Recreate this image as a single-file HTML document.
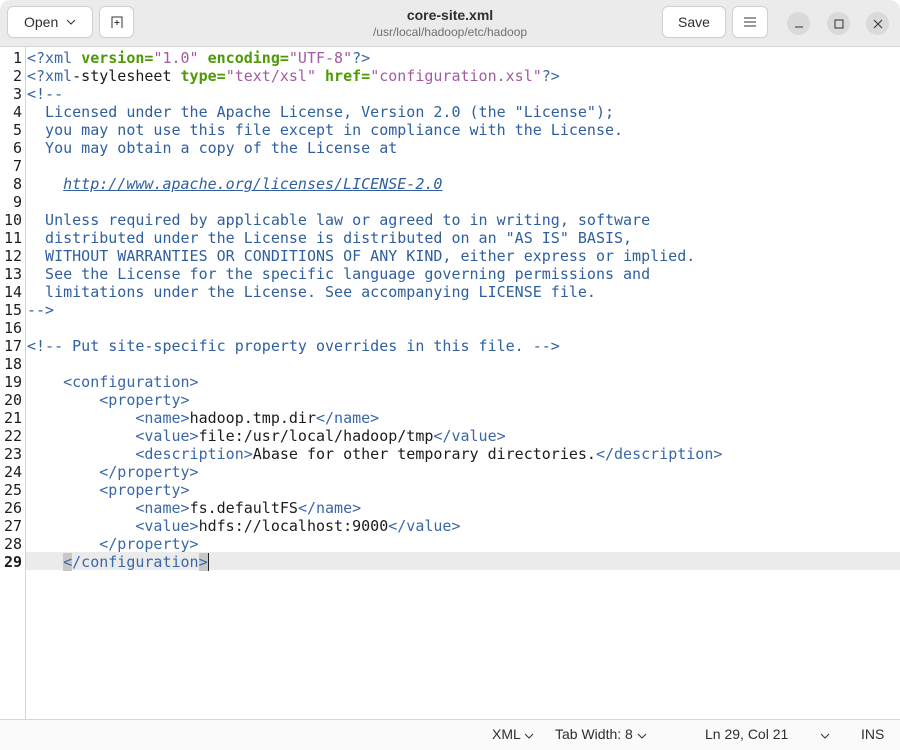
<!DOCTYPE html>
<html><head><meta charset="utf-8"><style>
body{margin:0;width:900px;height:749px;overflow:hidden;background:#fff;font-family:"Liberation Sans",sans-serif;position:relative}
.hdr{position:absolute;left:0;top:0;width:900px;height:46px;background:#ebebeb;border-bottom:1px solid #d6d6d6;border-radius:10px 10px 0 0}
.btn{position:absolute;top:6px;height:32px;background:#fff;border:1px solid #d0d0d0;border-radius:6px;box-sizing:border-box;font-size:14px;color:#2e2e2e;display:flex;align-items:center;justify-content:center}
.circ{position:absolute;top:12px;width:23px;height:23px;border-radius:50%;background:#dadada;display:flex;align-items:center;justify-content:center}
.title{position:absolute;left:0;width:900px;text-align:center}
.gut{position:absolute;left:0;top:47px;width:25px;height:672px;border-right:1px solid #d6d6d6;background:#fff}
.code{position:absolute;left:0;top:49px;font-family:"DejaVu Sans Mono","Liberation Mono",monospace;font-size:15px;line-height:18px;white-space:pre;color:#1c1c1c}
.ln{display:inline-block;width:22px;text-align:right;margin-right:5px;color:#1c1c1c}
.t{color:#3a67a8}.a{color:#4e9a06;font-weight:bold}.s{color:#a25ca0}.c{color:#2f5f9f}
.cur{position:absolute;left:26px;top:552px;width:874px;height:18px;background:#ebebeb}
.sb{position:absolute;left:0;top:719px;width:900px;height:30px;background:#fafafa;border-top:1px solid #d6d6d6;font-size:14px;color:#2e2e2e}
.sb span{position:absolute;top:6px}
</style></head><body>
<div class="hdr">
<div class="btn" style="left:7px;width:86px">Open&nbsp;&nbsp;<svg width="10" height="6"><path d="M1 1l4 4 4-4" stroke="#333" fill="none"/></svg></div>
<div class="btn" style="left:99px;width:35px"><svg width="14" height="14"><path d="M2 13V2h10v11M4.5 7.5h5M7 5v5" stroke="#333" fill="none"/></svg></div>
<div class="title" style="top:7px;font-size:14px;font-weight:bold;color:#2e2e2e">core-site.xml</div>
<div class="title" style="top:25px;font-size:12px;color:#707070">/usr/local/hadoop/etc/hadoop</div>
<div class="btn" style="left:662px;width:64px">Save</div>
<div class="btn" style="left:732px;width:36px"><svg width="12" height="10"><path d="M0 1h12M0 5h12M0 9h12" stroke="#333"/></svg></div>
<div class="circ" style="left:787px"><svg width="10" height="10"><path d="M1 8h8" stroke="#333"/></svg></div>
<div class="circ" style="left:827px"><svg width="10" height="10"><rect x="1" y="1" width="8" height="8" stroke="#333" fill="none"/></svg></div>
<div class="circ" style="left:866px"><svg width="10" height="10"><path d="M1 1l8 8M9 1l-8 8" stroke="#333"/></svg></div>
</div>
<div class="gut"></div>
<div class="cur"></div>
<div class="code"><span class="ln">1</span><span class="t">&lt;?xml</span> <span class="a">version=</span><span class="s">"1.0"</span> <span class="a">encoding=</span><span class="s">"UTF-8"</span><span class="t">?&gt;</span>
<span class="ln">2</span><span class="t">&lt;?xml</span>-stylesheet <span class="a">type=</span><span class="s">"text/xsl"</span> <span class="a">href=</span><span class="s">"configuration.xsl"</span><span class="t">?&gt;</span>
<span class="ln">3</span><span class="c">&lt;!--</span>
<span class="ln">4</span><span class="c">  Licensed under the Apache License, Version 2.0 (the "License");</span>
<span class="ln">5</span><span class="c">  you may not use this file except in compliance with the License.</span>
<span class="ln">6</span><span class="c">  You may obtain a copy of the License at</span>
<span class="ln">7</span>
<span class="ln">8</span><span class="c">    <i style="text-decoration:underline">http://www.apache.org/licenses/LICENSE-2.0</i></span>
<span class="ln">9</span>
<span class="ln">10</span><span class="c">  Unless required by applicable law or agreed to in writing, software</span>
<span class="ln">11</span><span class="c">  distributed under the License is distributed on an "AS IS" BASIS,</span>
<span class="ln">12</span><span class="c">  WITHOUT WARRANTIES OR CONDITIONS OF ANY KIND, either express or implied.</span>
<span class="ln">13</span><span class="c">  See the License for the specific language governing permissions and</span>
<span class="ln">14</span><span class="c">  limitations under the License. See accompanying LICENSE file.</span>
<span class="ln">15</span><span class="c">--&gt;</span>
<span class="ln">16</span>
<span class="ln">17</span><span class="c">&lt;!-- Put site-specific property overrides in this file. --&gt;</span>
<span class="ln">18</span>
<span class="ln">19</span>    <span class="t">&lt;configuration&gt;</span>
<span class="ln">20</span>        <span class="t">&lt;property&gt;</span>
<span class="ln">21</span>            <span class="t">&lt;name&gt;</span>hadoop.tmp.dir<span class="t">&lt;/name&gt;</span>
<span class="ln">22</span>            <span class="t">&lt;value&gt;</span>file:/usr/local/hadoop/tmp<span class="t">&lt;/value&gt;</span>
<span class="ln">23</span>            <span class="t">&lt;description&gt;</span>Abase for other temporary directories.<span class="t">&lt;/description&gt;</span>
<span class="ln">24</span>        <span class="t">&lt;/property&gt;</span>
<span class="ln">25</span>        <span class="t">&lt;property&gt;</span>
<span class="ln">26</span>            <span class="t">&lt;name&gt;</span>fs.defaultFS<span class="t">&lt;/name&gt;</span>
<span class="ln">27</span>            <span class="t">&lt;value&gt;</span>hdfs://localhost:9000<span class="t">&lt;/value&gt;</span>
<span class="ln">28</span>        <span class="t">&lt;/property&gt;</span>
<span class="ln"><b>29</b></span>    <span class="t"><span style="background:#c8c8c8">&lt;</span>/configuration<span style="background:#c8c8c8;border-right:1px solid #222">&gt;</span></span></div>
<div class="sb">
<span style="left:492px">XML <svg width="10" height="6"><path d="M1 1l4 4 4-4" stroke="#333" fill="none"/></svg></span>
<span style="left:555px">Tab Width: 8 <svg width="10" height="6"><path d="M1 1l4 4 4-4" stroke="#333" fill="none"/></svg></span>
<span style="left:705px">Ln 29, Col 21</span>
<span style="left:820px"><svg width="10" height="6"><path d="M1 1l4 4 4-4" stroke="#333" fill="none"/></svg></span>
<span style="left:861px">INS</span>
</div>
</body></html>
